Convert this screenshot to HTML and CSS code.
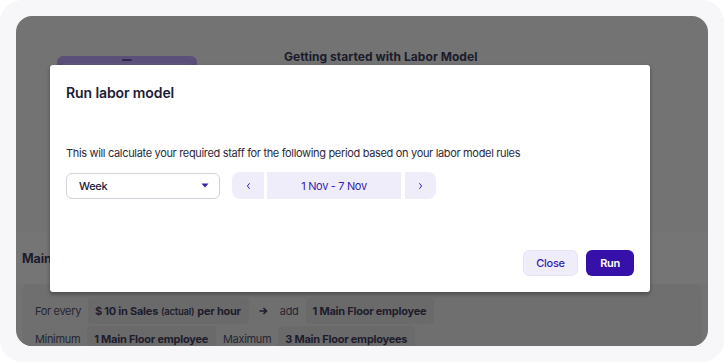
FILE: index.html
```html
<!DOCTYPE html>
<html lang="en">
<head>
<meta charset="utf-8">
<title>Run labor model</title>
<link rel="stylesheet" href="styles.css">
</head>
<body>
<div class="frame">
  <div class="backdrop">
    <div class="top">
      <div class="card">
        <div class="card-handle"></div>
        <div class="card-inner"></div>
      </div>
      <div class="page-title">Getting started with Labor Model</div>
    </div>
    <div class="section-head">Main</div>
    <div class="panel">
      <div class="rule-row">
        <span class="label">For every</span>
        <span class="chip">$ 10 in Sales <small>(actual)</small> per hour</span>
        <svg class="arrow" width="9" height="8" viewBox="0 0 9 8"><path d="M0.5 4H7.6M4.4 0.9L7.6 4L4.4 7.1" fill="none" stroke="#1c1b2b" stroke-width="1.4"/></svg>
        <span class="label">add</span>
        <span class="chip">1 Main Floor employee</span>
      </div>
      <div class="rule-row">
        <span class="label">Minimum</span>
        <span class="chip">1 Main Floor employee</span>
        <span class="label">Maximum</span>
        <span class="chip">3 Main Floor employees</span>
      </div>
    </div>

    <div class="modal">
      <div class="modal-title">Run labor model</div>
      <p class="modal-text">This will calculate your required staff for the following period based on your labor model rules</p>
      <div class="controls">
        <div class="select">
          <span>Week</span>
          <svg class="caret" width="8" height="5" viewBox="0 0 8 5"><path d="M0.5 0.5h7L4 4.5z" fill="#3a1cae"/></svg>
        </div>
        <div class="date-nav">
          <button class="nav-btn prev" type="button"><svg width="5" height="8" viewBox="0 0 5 8"><path d="M3.6 1.2L1.4 4L3.6 6.8" fill="none" stroke="#3a1cae" stroke-width="1"/></svg></button>
          <div class="date-range">1 Nov - 7 Nov</div>
          <button class="nav-btn next" type="button"><svg width="5" height="8" viewBox="0 0 5 8"><path d="M1.4 1.2L3.6 4L1.4 6.8" fill="none" stroke="#3a1cae" stroke-width="1"/></svg></button>
        </div>
      </div>
      <div class="modal-footer">
        <button class="btn btn-secondary" type="button">Close</button>
        <button class="btn btn-primary" type="button">Run</button>
      </div>
    </div>
  </div>
</div>
</body>
</html>
```

FILE: styles.css
```css
* { box-sizing: border-box; }

html, body {
  margin: 0;
  padding: 0;
  background: #ffffff;
  font-family: Inter, "Noto Sans", "Liberation Sans", sans-serif;
}

.frame {
  width: 724px;
  height: 362px;
  background: #f7f7fa;
  border-radius: 22px;
  padding: 16px;
  font-size: 11px;
  letter-spacing: -0.33px;
}

.backdrop {
  position: relative;
  height: 100%;
  background: #737373;
  border-radius: 16px;
  overflow: hidden;
}

.top {
  display: flex;
  align-items: flex-start;
  height: 217px;
  padding: 33px 0 0 41px;
}

.card {
  width: 140px;
  height: 150px;
  margin-top: 7px;
  background: #5b5079;
  border-radius: 6px;
  padding: 3px 5px 0;
  display: flex;
  flex-direction: column;
  align-items: center;
}

.card-handle {
  width: 10px;
  height: 2px;
  border-radius: 1px;
  background: #2f2947;
}

.card-inner {
  margin-top: 2px;
  align-self: stretch;
  flex: 1;
  background: #615880;
  border-radius: 4px;
}

.page-title {
  margin-left: 87px;
  font-size: 12px;
  font-weight: 700;
  line-height: 16px;
  letter-spacing: 0.05px;
  color: #1c1b2b;
}

.section-head {
  height: 50px;
  display: flex;
  align-items: center;
  padding-left: 6px;
  padding-top: 1px;
  background: #757575;
  font-size: 12.5px;
  font-weight: 700;
  letter-spacing: -0.1px;
  color: #1c1b2b;
}

.panel {
  margin: 1px 6px 0;
  padding: 14px 13px;
  background: #6f6f70;
  border-radius: 6px;
  display: flex;
  flex-direction: column;
  gap: 2px;
}

.rule-row {
  display: flex;
  align-items: center;
  gap: 7px;
  height: 26px;
}

.label {
  color: #262633;
}

.arrow {
  display: block;
  margin: 0 5px 0 3px;
}

.chip {
  height: 26px;
  display: flex;
  align-items: center;
  gap: 3px;
  padding: 0 8px 0 7px;
  background: #6a6a6b;
  border-radius: 4px;
  font-weight: 700;
  letter-spacing: -0.25px;
  color: #1e1d2c;
}

.chip small {
  font-size: 9.5px;
  font-weight: 600;
}

.modal {
  position: absolute;
  left: 34px;
  top: 49px;
  width: 600px;
  height: 227px;
  background: #ffffff;
  border-radius: 3px;
  box-shadow: 0 2px 4px rgba(0, 0, 0, 0.35);
  padding: 18px 16px 16px;
  display: flex;
  flex-direction: column;
}

.modal-title {
  font-size: 14px;
  font-weight: 600;
  line-height: 20px;
  letter-spacing: -0.1px;
  color: #1d1b36;
}

.modal-text {
  margin: 42px 0 0;
  line-height: 16px;
  color: #2b2a3d;
}

.controls {
  margin-top: 11px;
  display: flex;
  align-items: center;
  gap: 12px;
}

.select {
  width: 154px;
  height: 26px;
  border: 1px solid #d3d2dc;
  border-radius: 6px;
  display: flex;
  align-items: center;
  justify-content: space-between;
  padding: 0 10px 0 12px;
  font-weight: 500;
  color: #1d1b36;
}

.caret { display: block; }

.date-nav {
  display: flex;
  align-items: stretch;
  gap: 3px;
  height: 27px;
}

.nav-btn {
  width: 32px;
  border: none;
  margin: 0;
  padding: 0;
  background: #efedfa;
  display: flex;
  align-items: center;
  justify-content: center;
  font: inherit;
}

.nav-btn svg { display: block; }

.prev { border-radius: 8px 0 0 8px; }

.next {
  width: 31px;
  margin-left: 1px;
  border-radius: 0 8px 8px 0;
}

.date-range {
  width: 134px;
  background: #efedfa;
  display: flex;
  align-items: center;
  justify-content: center;
  color: #3a1cae;
}

.modal-footer {
  margin-top: auto;
  display: flex;
  justify-content: flex-end;
  gap: 8px;
}

.btn {
  height: 26px;
  border-radius: 6px;
  font-family: inherit;
  font-size: 11px;
  letter-spacing: -0.3px;
  font-weight: 600;
  padding: 0;
  display: flex;
  align-items: center;
  justify-content: center;
}

.btn-secondary {
  width: 55px;
  background: #efedfa;
  border: 1px solid #e7e4f6;
  color: #3a1cae;
  font-weight: 500;
}

.btn-primary {
  width: 48px;
  background: #3511a9;
  border: none;
  color: #ffffff;
}
```
